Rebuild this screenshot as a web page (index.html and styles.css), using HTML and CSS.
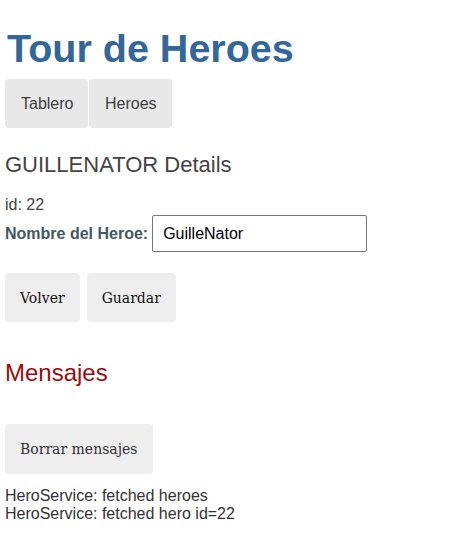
FILE: index.html
```html
<!DOCTYPE html>
<html>
<head>
<meta charset="utf-8">
<link rel="stylesheet" href="styles.css">
</head>
<body>
<h1 class="title">Tour de Heroes</h1>
<nav class="nav">
  <a class="nav-link">Tablero</a>
  <a class="nav-link">Heroes</a>
</nav>
<section class="detail">
  <h2 class="detail-title">GUILLENATOR Details</h2>
  <div class="id-line">id: 22</div>
  <div class="name-row">
    <label class="name-label">Nombre del Heroe:</label>
    <input class="name-input" value="GuilleNator">
  </div>
  <div class="actions">
    <button class="btn">Volver</button>
    <button class="btn">Guardar</button>
  </div>
</section>
<section class="messages">
  <h2 class="messages-title">Mensajes</h2>
  <button class="btn btn-clear">Borrar mensajes</button>
  <div class="msg">HeroService: fetched heroes</div>
  <div class="msg">HeroService: fetched hero id=22</div>
</section>
</body>
</html>
```
FILE: styles.css
```css
html, body { margin: 0; padding: 0; background: #fff; }
body {
  padding: 5px;
  font-family: "Liberation Sans", Arial, sans-serif;
  color: #333;
}
.title {
  margin: 20px 0 8px 2px;
  font-size: 39.5px;
  line-height: 46px;
  color: #336699;
  font-weight: bold;
}
.nav { display: flex; }
.nav-link {
  display: block;
  padding: 15px 16px;
  background: #e8e8e8;
  border-radius: 4px;
  color: #3d3d3d;
  font-size: 16px;
  line-height: 19px;
  width: 51px;
  text-align: center;
}
.nav-link + .nav-link { margin-left: 1px; }
.detail-title {
  margin: 24px 0 0;
  font-size: 22px;
  line-height: 26px;
  font-weight: normal;
  color: #444;
}
.id-line { margin-top: 18px; font-size: 16px; line-height: 18px; color: #444; }
.name-row { display: flex; align-items: center; margin-top: 1px; }
.name-label { font-weight: bold; color: #435960; font-size: 16px; margin-right: 4px; }
.name-input {
  width: 215px;
  height: 37px;
  box-sizing: border-box;
  border: 1px solid #767676;
  border-radius: 2px;
  padding: 0 10px;
  font-family: "Liberation Sans", Arial, sans-serif;
  font-size: 16px;
  color: #000;
}
.actions { display: flex; gap: 7px; margin-top: 21px; }
.btn {
  font-family: "DejaVu Serif", "Liberation Serif", serif;
  font-size: 14px;
  background: #eee;
  border: none;
  border-radius: 4px;
  height: 49px;
  padding: 0 15px;
  color: #111;
}
.messages-title {
  margin: 37px 0 0;
  font-size: 24px;
  line-height: 28px;
  font-weight: normal;
  color: #9e0a0a;
}
.btn-clear { margin-top: 37px; height: 50px; color: #333; }
.msg { font-size: 16px; line-height: 18px; color: #333; }
.btn-clear + .msg { margin-top: 13px; }
```
